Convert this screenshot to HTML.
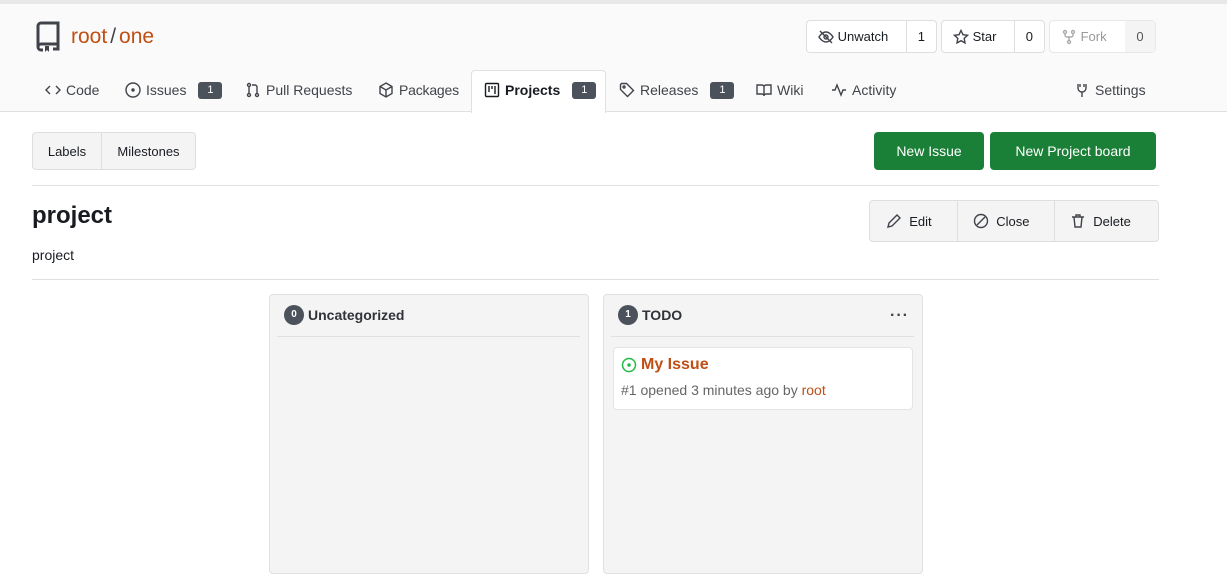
<!DOCTYPE html>
<html><head><meta charset="utf-8"><style>
*{box-sizing:border-box;margin:0;padding:0}
body{width:1227px;height:559px;overflow:hidden;background:#fff;font-family:"Liberation Sans",sans-serif;color:#181c21;position:relative;font-size:14px}
.a{position:absolute}
.hdr{left:0;top:0;width:1227px;height:112px;background:#fafafa;border-top:4px solid #e8e8e8;border-bottom:1px solid #e0e0e0}
.tab{position:absolute;top:80px;height:20px;font-size:14px;color:#40444a;display:flex;align-items:center;gap:5px;white-space:nowrap}
.badge{background:#4c525b;color:#fff;font-size:11px;border-radius:3px;width:24px;height:17px;line-height:17px;text-align:center;margin-left:7px}
.btn{position:absolute;border:1px solid #dedede;border-radius:4px;background:#fff;font-size:13px;display:flex;align-items:center}
.btn span{display:flex;align-items:center;height:100%;padding:0 11px}
svg{fill:none;stroke:#40444a;stroke-width:1.4}
.g{background:#1a7f37;color:#fff;border-radius:4px;position:absolute;top:132px;height:38px;font-size:14px;display:flex;align-items:center;justify-content:center}
.col{position:absolute;top:294px;height:280px;background:#f4f4f4;border:1px solid #e0e0e0;border-radius:4px}
.cnt{display:inline-block;width:20px;height:20px;border-radius:10px;background:#4c525b;color:#fff;font-size:10px;text-align:center;line-height:20px;margin-right:4px}
</style></head><body>
<div class="a hdr"></div>
<svg class="a" style="left:34px;top:21px" width="28" height="32" viewBox="0 0 28 32"><path d="M4 25V5a3 3 0 0 1 3-3h17v21H7a3 3 0 0 0-3 3 3 3 0 0 0 3 3h2M24 23v5h-5" stroke="#40444a" stroke-width="3"/><path d="M11 25v6l2-2 2 2v-6z" fill="#40444a" stroke="none"/></svg>
<div class="a" style="left:71px;top:25px;font-size:21px;color:#c04f14">root<span style="color:#40444a;margin:0 3px">/</span>one</div>

<div class="btn" style="left:806px;top:20px;height:33px;width:131px"><span style="width:100px;border-right:1px solid #dedede;padding-left:11px"><svg width="16" height="16" viewBox="0 0 16 16"><path d="M1 8s3-5 7-5 7 5 7 5-3 5-7 5-7-5-7-5z"/><circle cx="8" cy="8" r="2"/><path d="M2 2l12 12"/></svg>&nbsp;Unwatch</span><span>1</span></div>
<div class="btn" style="left:941px;top:20px;height:33px;width:104px"><span style="width:73px;border-right:1px solid #dedede"><svg width="16" height="16" viewBox="0 0 16 16"><path d="M8 1.5l2 4.2 4.5.6-3.3 3.1.8 4.5L8 11.7l-4 2.2.8-4.5L1.5 6.3 6 5.7z"/></svg>&nbsp;Star</span><span>0</span></div>
<div class="btn" style="left:1049px;top:20px;height:33px;width:107px;color:#999;border-color:#e8e8e8"><span style="width:75px"><svg width="16" height="16" viewBox="0 0 16 16" style="stroke:#aaa"><circle cx="4" cy="3" r="1.5"/><circle cx="12" cy="3" r="1.5"/><circle cx="8" cy="13" r="1.5"/><path d="M4 4.5v1.5a2 2 0 0 0 2 2h4a2 2 0 0 0 2-2V4.5M8 8v3.5"/></svg>&nbsp;Fork</span><span style="background:#f4f4f4;color:#555;flex:1;justify-content:center">0</span></div>

<div class="a" style="left:471px;top:70px;width:135px;height:43px;background:#fff;border:1px solid #e0e0e0;border-bottom:none;border-radius:4px 4px 0 0"></div>
<div class="tab" style="left:45px"><svg width="16" height="16" viewBox="0 0 16 16"><path d="M5 4L1 8l4 4M11 4l4 4-4 4"/></svg>Code</div>
<div class="tab" style="left:125px"><svg width="16" height="16" viewBox="0 0 16 16"><circle cx="8" cy="8" r="7"/><circle cx="8" cy="8" r="1" fill="#40444a"/></svg>Issues<span class="badge">1</span></div>
<div class="tab" style="left:245px"><svg width="16" height="16" viewBox="0 0 16 16"><circle cx="4" cy="3" r="1.5"/><circle cx="4" cy="13" r="1.5"/><circle cx="12" cy="13" r="1.5"/><path d="M4 4.5v7M12 11.5V5a2 2 0 0 0-2-2H7"/></svg>Pull Requests</div>
<div class="tab" style="left:378px;letter-spacing:-0.2px"><svg width="16" height="16" viewBox="0 0 16 16"><path d="M8 1l6 3.5v7L8 15l-6-3.5v-7zM2 4.5L8 8l6-3.5M8 8v7"/></svg>Packages</div>
<div class="tab" style="left:484px;color:#181c21;font-weight:bold"><svg width="16" height="16" viewBox="0 0 16 16" style="stroke:#181c21"><rect x="1.5" y="1.5" width="13" height="13" rx="1"/><path d="M5 4v6M8 4v3M11 4v8"/></svg>Projects<span class="badge" style="font-weight:normal">1</span></div>
<div class="tab" style="left:619px"><svg width="16" height="16" viewBox="0 0 16 16"><path d="M1.5 2.5v5l7 7 6-6-7-7h-5z"/><circle cx="5" cy="5" r="1"/></svg>Releases<span class="badge">1</span></div>
<div class="tab" style="left:756px"><svg width="16" height="16" viewBox="0 0 16 16"><path d="M1 3h5a2 2 0 0 1 2 2v9a2 2 0 0 0-2-2H1zM15 3h-5a2 2 0 0 0-2 2v9a2 2 0 0 1 2-2h5z"/></svg>Wiki</div>
<div class="tab" style="left:831px"><svg width="16" height="16" viewBox="0 0 16 16"><path d="M1 8h3l2-5 4 10 2-5h3"/></svg>Activity</div>
<div class="tab" style="left:1074px"><svg width="16" height="16" viewBox="0 0 16 16"><path d="M4 2v4a4 4 0 0 0 8 0V2M8 10v5M6 2v3M10 2v3"/></svg>Settings</div>

<div class="btn" style="left:32px;top:132px;height:38px;width:164px;background:#f4f4f4;font-size:13px"><span style="width:69px;border-right:1px solid #dedede;justify-content:center">Labels</span><span style="flex:1;justify-content:center">Milestones</span></div>
<div class="g" style="left:874px;width:110px">New Issue</div>
<div class="g" style="left:990px;width:166px">New Project board</div>
<div class="a" style="left:32px;top:185px;width:1127px;border-top:1px solid #e0e0e0"></div>
<div class="a" style="left:32px;top:202px;font-size:24px;font-weight:bold">project</div>
<div class="btn" style="left:869px;top:200px;height:42px;width:290px;background:#f4f4f4"><span style="width:88px;border-right:1px solid #dedede;padding-left:16px"><svg width="16" height="16" viewBox="0 0 16 16"><path d="M11 2l3 3-8 8-4 1 1-4z"/></svg>&nbsp;&nbsp;Edit</span><span style="width:97px;border-right:1px solid #dedede;padding-left:15px"><svg width="16" height="16" viewBox="0 0 16 16"><circle cx="8" cy="8" r="6.5"/><path d="M4 12l8-8"/></svg>&nbsp;&nbsp;Close</span><span style="padding-left:15px"><svg width="16" height="16" viewBox="0 0 16 16"><path d="M2 4h12M6 4V2h4v2M4 4l1 10h6l1-10"/></svg>&nbsp;&nbsp;Delete</span></div>
<div class="a" style="left:32px;top:247px;font-size:14px">project</div>
<div class="a" style="left:32px;top:279px;width:1127px;border-top:1px solid #e0e0e0"></div>

<div class="col" style="left:269px;width:320px">
 <div style="position:absolute;left:14px;top:10px;font-weight:bold;font-size:14px;color:#303338;display:flex;align-items:center"><span class="cnt">0</span>Uncategorized</div>
 <div style="position:absolute;left:7px;right:8px;top:41px;border-top:1px solid #e0e0e0"></div>
</div>
<div class="col" style="left:603px;width:320px">
 <div style="position:absolute;left:14px;top:10px;font-weight:bold;font-size:14px;color:#303338;display:flex;align-items:center"><span class="cnt">1</span>TODO</div>
 <div style="position:absolute;right:13px;top:12px;font-size:16px;font-weight:bold;letter-spacing:1px;color:#40444a">···</div>
 <div style="position:absolute;left:7px;right:8px;top:41px;border-top:1px solid #e0e0e0"></div>
 <div style="position:absolute;left:9px;top:52px;width:300px;height:63px;background:#fff;border:1px solid #e4e4e4;border-radius:4px">
  <div style="position:absolute;left:7px;top:8px;display:flex;align-items:center;gap:4px;color:#c04f14;font-size:16px;font-weight:bold"><svg width="16" height="16" viewBox="0 0 16 16" style="stroke:#21ba45;stroke-width:1.5"><circle cx="8" cy="8" r="6.5"/><circle cx="8" cy="8" r="1" fill="#21ba45"/></svg>My Issue</div>
  <div style="position:absolute;left:7px;top:34px;font-size:14px;color:#666">#1 opened 3 minutes ago by <span style="color:#c04f14">root</span></div>
 </div>
</div>
</body></html>
